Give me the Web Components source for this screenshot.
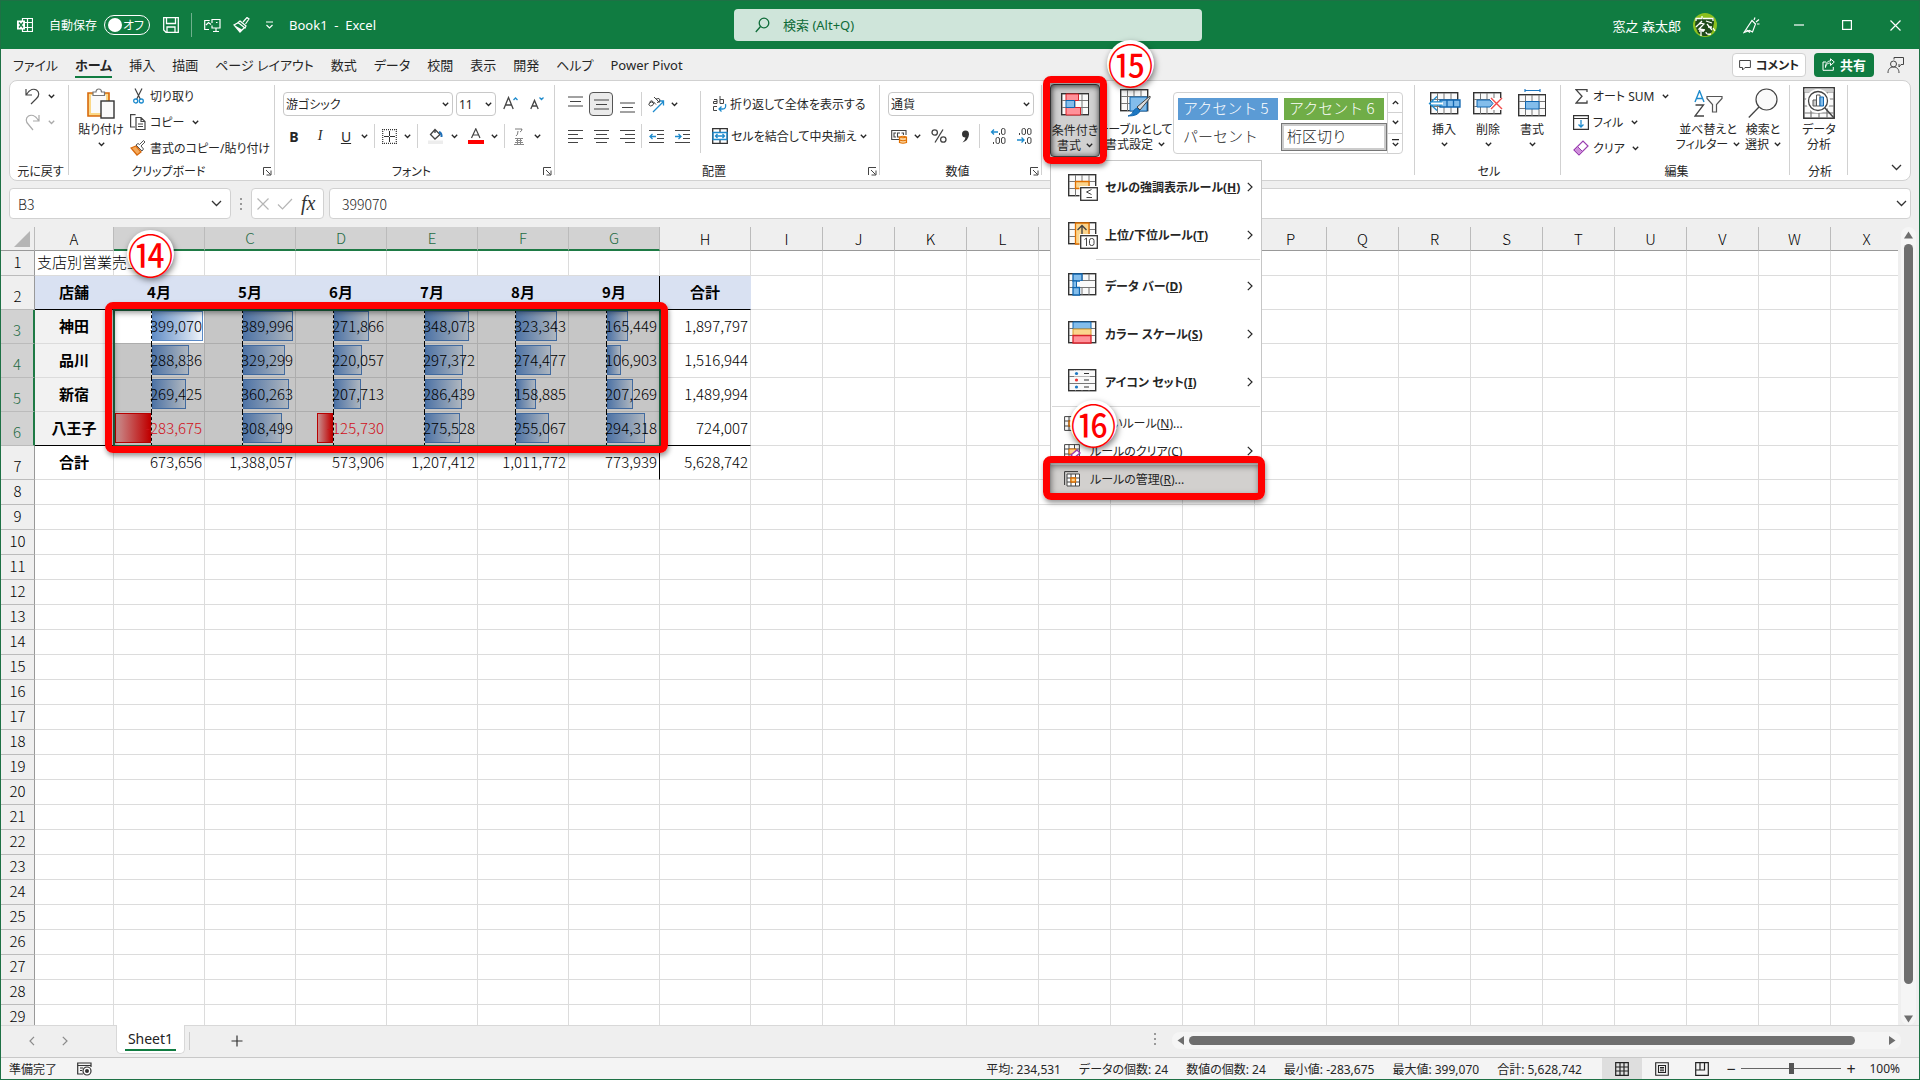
<!DOCTYPE html>
<html lang="ja">
<head>
<meta charset="utf-8">
<title>Book1 - Excel</title>
<style>
    html, body { height: 100%; }
    body {
        margin: 0;
        overflow: hidden;
        background: #efefef;
        color: #262626;
        font-family: "Noto Sans", "Noto Sans CJK JP", sans-serif;
        font-size: 12px;
        font-feature-settings: "palt";
    }
</style>
</head>
<body>
<excel-app></excel-app>

<script>
// width, height, markup
const G = 'fill="none" stroke="#444" stroke-width="1"';
const B = 'fill="none" stroke="#1e8bcd" stroke-width="1.3"';
const grid28 = `<rect x=".7" y=".7" width="27" height="21" fill="#fafafa" stroke="#333" stroke-width="1.4"/><path d="M1 7.5h26M1 14.5h26M7.5 1v21M14 1v21M21 1v21" fill="none" stroke="#777"/>`;
const ICONS = {
    excel: [16, 16, `<path d="M5.5 1.5h10v13h-10zM5 5.500h10M5 10.500h10M10.500 1.500v13" fill="none" stroke="#fff" stroke-width="1.2"/><rect x="0" y="3.500" width="8" height="9" fill="#fff"/><path d="M2 5.500l4 5M6 5.500l-4 5" stroke="#107c41" stroke-width="1.3"/>`],
    save: [16, 16, `<path d="M.7.700h14.600v14.600H3L.700 13zM3.500 1v5.500h9V1M4 15v-5h8v5" fill="none" stroke="#fff" stroke-width="1.300"/>`],
    screen: [17, 16, `<path d="M5 12.500H.700V3.500h5M8 6V2.500h8v8.500H8V8.500M12 11v3.500M9 14.500h6M2 8l2.500-2.500L7 7.500M12 5.500h1.500" fill="none" stroke="#fff" stroke-width="1.200"/>`],
    brushw: [17, 16, `<path d="M10 5l4-4.500 2 1.500-3.500 5M7 4l6 5-1 2-7-5.500zM5.500 5.500L1 8l6 7 4.500-4.500" fill="#107c41" stroke="#fff" stroke-width="1.200"/><path d="M1 8l6 6.800 2-2.300z" fill="#fff"/>`],
    qat: [9, 8, `<path d="M1 1h7M1.500 4l3 3 3-3" fill="none" stroke="#fff" stroke-width="1.200"/>`],
    search: [15, 16, `<circle cx="9" cy="6" r="4.800" fill="none" stroke="#0e6b38" stroke-width="1.300"/><path d="M5.500 9.500L.800 15" stroke="#0e6b38" stroke-width="1.300"/>`],
    avatar: [24, 24, `<circle cx="12" cy="12" r="12" fill="#8cc01f"/><path d="M3 5h18v5l-2 9-5 4h-4l-5-3-3-8z" fill="#1f4a1c"/><path d="M3 8V5.500h6V3M10 5.500h10V8M6 11l3-3M13 8l6 2M3 14q4-5 8-3l-5 5 6 1M14 11l5 6M8 19v4M6 18h5M13 19q0 3 5 2M20 15l2 3M15 14h4" fill="none" stroke="#fff" stroke-width="1.300"/>`],
    pen: [17, 17, `<path d="M1 15.500l8-12 3.500 3.500-3 8-3-1.500zM3 12.500l4 3M11 3l1-2.500M13 5l3-2.500M14 7h2.500" fill="none" stroke="#fff" stroke-width="1.200"/>`],
    min: [10, 10, `<path d="M0 5h10" stroke="#fff" stroke-width="1.200"/>`],
    max: [10, 10, `<rect x=".600" y=".600" width="8.800" height="8.800" fill="none" stroke="#fff" stroke-width="1.200"/>`],
    close: [11, 11, `<path d="M.500.500l10 10M10.500.500l-10 10" stroke="#fff" stroke-width="1.200"/>`],
    comment: [12, 12, `<path d="M.600 1.500h10.800v7H6L3.500 11V8.500H.600z" ${G}/>`],
    share: [13, 13, `<path d="M4 4H1v8.300h10.300V9M3.500 9.500C4 6 6 5 8.500 5V7.500L12.300 4 8.500.800V3C5 3 3.500 5.500 3.500 9.500z" fill="none" stroke="#fff"/>`],
    person: [18, 18, `<circle cx="6.500" cy="8" r="3" ${G}/><path d="M1 17c0-4 2-6 5.500-6s5.500 2 5.500 6M7 3.500v-2h9.500v7H14l-2 2.500V8" ${G}/>`],
    chev: [7, 5, `<path d="M.800.800l2.700 2.700L6.200.800" fill="none" stroke="currentColor" stroke-width="1.300"/>`],
    chevup: [7, 5, `<path d="M.800 4l2.700-2.700L6.200 4" fill="none" stroke="currentColor" stroke-width="1.300"/>`],
    chevbar: [7, 8, `<path d="M0 .700h7M.800 4l2.700 2.700L6.200 4" fill="none" stroke="currentColor" stroke-width="1.300"/>`],
    bigchev: [11, 7, `<path d="M1 1l4.500 4.500L10 1" fill="none" stroke="#333" stroke-width="1.300"/>`],
    right: [6, 10, `<path d="M.800.800L5 5 .800 9.200" fill="none" stroke="currentColor" stroke-width="1.200"/>`],
    left: [6, 10, `<path d="M5 .800L1 5l4 4.200" fill="none" stroke="currentColor" stroke-width="1.200"/>`],
    launcher: [9, 9, `<path d="M.500 8V.500H8M3 3l4.500 4.500M8 3.500v4.500H3.500" ${G}/>`],
    undo: [15, 17, `<path d="M1 1v6h6M1.500 6.500C5 1 9 .500 11.500 2c3 2 3 5.500 0 8.500L6 16" fill="none" stroke="#444" stroke-width="1.200"/>`],
    redo: [15, 17, `<path d="M14 1v6H8M13.500 6.500C10 1 6 .500 3.500 2c-3 2-3 5.500 0 8.500L8 16" fill="none" stroke="#aaa" stroke-width="1.200"/>`],
    paste: [28, 31, `<path d="M1 5h21v23H1z" fill="#fbd887" stroke="#d8690c" stroke-width="1.600"/><path d="M4 7h15v18H4z" fill="#fafafa"/><path d="M6 7.500V4h3c0-4 5.500-4 5.500 0h3v3.500z" fill="#fff" stroke="#777" stroke-width="1.200"/><rect x="14" y="13" width="13" height="17" fill="#fafafa" stroke="#333" stroke-width="1.400"/>`],
    cut: [11, 16, `<path d="M2 .500l5.500 11M9 .500L3.500 11.500" stroke="#444" stroke-width="1.200"/><circle cx="2.700" cy="13" r="2" ${B}/><circle cx="8.300" cy="13" r="2" ${B}/>`],
    copy: [16, 16, `<path d="M5 13H.600V.600h5M6 3.500h5l4 4v8H6zM11 3.500v4h4M8 10h5M8 12.500h5" fill="none" stroke="#444" stroke-width="1.200"/>`],
    brush: [16, 16, `<path d="M1 8l5-2 5 6-4 3z" fill="#f5a95a" stroke="#d8690c" stroke-width="1.300"/><path d="M6 5l6 6 1.500-2L11 6l4-4-1.500-1.500-4 4L8 3.500z" fill="#fff" stroke="#555"/>`],
    growf: [16, 16, `<path d="M.800 13L5.500 1.500 10.200 13M2.500 9h6" fill="none" stroke="#444" stroke-width="1.300"/><path d="M10.500 4l2-2 2 2" ${B}/>`],
    shrinkf: [15, 16, `<path d="M.800 13L4.500 4.500 8.200 13M2.200 10h4.600" fill="none" stroke="#444" stroke-width="1.300"/><path d="M9.500 1.500l2 2 2-2" ${B}/>`],
    borders: [15, 15, `<path d="M0 .700h15M0 14.300h15M.700 0v15M14.300 0v15" stroke="#333" stroke-width="1.200" stroke-dasharray="1 1"/><path d="M7.500 2v11M2 7.500h11" stroke="#333" stroke-width="1" stroke-dasharray="5 1"/>`],
    fill: [16, 16, `<path d="M7 1.500l5 5-5 4.500-4.500-4.500zM7 1v4" fill="none" stroke="#444" stroke-width="1.300"/><path d="M11 4q3 1 2.500 5" stroke="#1e6fb8" stroke-width="2" fill="none"/><rect x="0" y="12.500" width="15" height="3.500" fill="#ededed"/>`],
    fontc: [16, 16, `<path d="M3.500 10L7.800.800 12 10M5 7h5.600" fill="none" stroke="#444" stroke-width="1.200"/><rect x="0" y="12" width="16" height="4" fill="#f00"/>`],
    ruby: [12, 17, `<path d="M2 1h7q0 2-2 3M5 3q0 4-2 5" ${G} opacity=".700"/><path d="M2 10.500h8M3 12.500h6M2 14.500h8M1 16.500h10M4.500 10v6M7.500 10v6" stroke="#888"/>`],
    top: [15, 17, `<path d="M0 1h15M2 5.500h11M0 10h15" stroke="#444" stroke-width="1.200"/>`],
    middle: [15, 17, `<path d="M0 4h15M2 8.500h11M0 13h15" stroke="#444" stroke-width="1.200"/>`],
    bottom: [15, 17, `<path d="M0 7h15M2 11.500h11M0 16h15" stroke="#444" stroke-width="1.200"/>`],
    center: [15, 15, `<path d="M0 1.500h15M2 5.500h11M0 9.500h15M2 13.500h11" stroke="#444" stroke-width="1.200"/>`],
    leftal: [15, 15, `<path d="M0 1.500h15M0 5.500h10M0 9.500h15M0 13.500h10" stroke="#444" stroke-width="1.200"/>`],
    rightal: [15, 15, `<path d="M0 1.500h15M5 5.500h10M0 9.500h15M5 13.500h10" stroke="#444" stroke-width="1.200"/>`],
    orient: [17, 17, `<path d="M5 16L15.500 5.500M11 5h4.500v4.500" ${B}/><path d="M1.500 6.500q1-3 3.500-1l3 3M6 6.500q-1 4-3.500 3.500-3-1-1-3t4 0M6 1l5.500 5.500M8 3q4-1.500 4 1t-3 2.500" ${G}/>`],
    outdent: [15, 15, `<path d="M0 1.500h15M8 5.500h7M8 9.500h7M0 13.500h15" stroke="#444" stroke-width="1.200"/><path d="M7 7.500H1M3.500 5L1 7.500 3.500 10" ${B}/>`],
    indent: [15, 15, `<path d="M0 1.500h15M8 5.500h7M8 9.500h7M0 13.500h15" stroke="#444" stroke-width="1.200"/><path d="M0 7.500h6M3.500 5L6 7.500 3.500 10" ${B}/>`],
    wrap: [15, 17, `<path d="M5 7.500V3.500H2M5 5.500H1.500v2H5M8 0v7.500h3.500v-4H8M5 10.500H1.500v4H5" ${G}/><path d="M13.500 8q1 5-3 5H7M9.500 10.500L7 13l2.500 2.500" ${B}/>`],
    merge: [16, 16, `<path d="M.700.700h14.600v14.600H.700zM8 1v3M8 12v3" fill="none" stroke="#333" stroke-width="1.300"/><path d="M1 4.500h14v7H1zM3.500 8h9M5.500 6L3.500 8l2 2M10.500 6l2 2-2 2" ${B}/>`],
    currency: [17, 15, `<path d="M8 10.500H.700v-9H15V6M5 4H3v4h2M9 4H6.500v4h2M10.500 4h2v2" fill="none" stroke="#444" stroke-width="1.100"/><path d="M8.500 8v5.500q3.500 1.500 7 0V8q-3.500-1.500-7 0 3.500 1.500 7 0M8.500 11q3.500 1.500 7 0" fill="#fbd29b" stroke="#e07000" stroke-width="1.200"/>`],
    percent: [16, 16, `<circle cx="3.700" cy="4.500" r="2.700" fill="none" stroke="#444" stroke-width="1.300"/><circle cx="12.300" cy="11.500" r="2.700" fill="none" stroke="#444" stroke-width="1.300"/><path d="M12 1.500L4 14.500" stroke="#444" stroke-width="1.300"/>`],
    comma: [9, 13, `<path d="M4.500.500a3.500 3.500 0 1 0 0 7Q4 10.500 1.500 12.500q6-2 6.500-8Q8 .500 4.500.500" fill="#333"/>`],
    decinc: [16, 16, `<path d="M8 4H1.500M4 1.500L1.500 4 4 6.500" ${B}/><rect x="11.500" y=".500" width="3.500" height="6" rx="1.500" ${G}/><rect x="6" y="9.500" width="3.500" height="6" rx="1.500" ${G}/><rect x="11.500" y="9.500" width="3.500" height="6" rx="1.500" ${G}/><path d="M3.500 14v2M9.500 5v2" stroke="#444"/>`],
    decdec: [16, 16, `<path d="M1 12h7M5.500 9.500L8 12l-2.500 2.500" ${B}/><rect x="11.500" y=".500" width="3.500" height="6" rx="1.500" ${G}/><rect x="6" y=".500" width="3.500" height="6" rx="1.500" ${G}/><rect x="11.500" y="9.500" width="3.500" height="6" rx="1.500" ${G}/><path d="M3.500 5v2M9.500 14v2" stroke="#444"/>`],
    condfmt: [28, 23, grid28 + `<path d="M5 1h12.500v6.500H5zM5 14.500h14.500V22H5z" fill="#ff9199" stroke="#d8222b"/><path d="M5 7.500h8.500v7H5z" fill="#83bdeb" stroke="#1066b0"/>`],
    tablefmt: [31, 28, grid28 + `<path d="M10 8h17v14H10z" fill="#83bdeb" stroke="#1066b0"/><path d="M30 7L17 18l3 3L30 9z" fill="#ddd" stroke="#444"/><path d="M17 19l3 3q-2 5-12 5 4-1 5-4t4-4" fill="#1e78c2" stroke="#1066b0"/>`],
    insert: [33, 23, `<g transform="translate(2 0)">${grid28}</g><path d="M12 8h20v7H12zM19 8v7M25.500 8v7" fill="#83bdeb" stroke="#1066b0" stroke-width="1.300"/><path d="M3 9.800h12v3.400H3z" fill="#fff"/><path d="M9 4.500L1.500 11.500 9 18.500M2.500 9.800h12M2.500 13.200h12" fill="none" stroke="#1e8bcd" stroke-width="1.300"/>`],
    del: [30, 23, grid28 + `<rect x="17" y="6" width="13" height="12" fill="#fff"/><path d="M4 8h13l3 3.500-3 3.500H4z" fill="#83bdeb" stroke="#1066b0"/><path d="M18 6l11 11M29 6L18 17" stroke="#f04b4b" stroke-width="1.400"/>`],
    format: [28, 29, `<path d="M7 1.500h15M7 0v3M22 0v3" stroke="#1e78c2" stroke-width="1.200"/><g transform="translate(0 5)">${grid28}<path d="M7.500 7.500H21v7.500H7.500z" fill="#83bdeb" stroke="#1066b0"/></g>`],
    sum: [13, 15, `<path d="M12 3V.700H1l6 6.600L1 14h11v-2.500" fill="none" stroke="#444" stroke-width="1.300"/>`],
    filld: [16, 15, `<path d="M.600.600h14.800v13.800H.600zM.600 3.500h14.800" fill="none" stroke="#333" stroke-width="1.200"/><path d="M8 5v7M5.500 9.500L8 12l2.500-2.500" ${B}/>`],
    eraser: [16, 16, `<path d="M1 10L10 1l5 5-9 9z" fill="#fff" stroke="#9a3fb0" stroke-width="1.200"/><path d="M1 10l3.500-3.500 5 5L6 15z" fill="#cf8fdb" stroke="#9a3fb0"/>`],
    sort: [29, 27, `<path d="M1 12L5.500.800 10 12M2.700 8.500h5.600" fill="none" stroke="#1e8bcd" stroke-width="1.400"/><path d="M1.500 15h8L1 26h9" fill="none" stroke="#444" stroke-width="1.300"/><path d="M13 6.500h15v2l-5.500 6V22h-4v-7.500l-5.500-6z" fill="#fafafa" stroke="#555" stroke-width="1.200"/>`],
    find: [30, 30, `<circle cx="18.500" cy="11.500" r="10.500" fill="#fafafa" stroke="#444" stroke-width="1.200"/><path d="M11 19L.800 29.500" stroke="#444" stroke-width="1.300"/>`],
    analyze: [32, 32, `<rect x=".800" y=".800" width="30.400" height="30.400" fill="#fafafa" stroke="#333" stroke-width="1.500"/><path d="M1 5h30M1 12h30M1 19h30M1 26h30M8 5v26M16 5v26M24 5v26" stroke="#777" stroke-width="1.200"/><rect x="1.500" y="1.500" width="29" height="3.500" fill="#ccc"/><circle cx="15" cy="14" r="10.500" fill="#fff" stroke="#fff" stroke-width="3"/><circle cx="15" cy="14" r="9.500" fill="#fff" stroke="#444" stroke-width="1.300"/><path d="M22 21l9 10" stroke="#444" stroke-width="1.500"/><path d="M10 13h3.500v6H10z" fill="#ccc" stroke="#555"/><path d="M13.500 8h3.500v11h-3.500z" fill="#fff" stroke="#555"/><path d="M17 10h3.500v9H17z" fill="#83bdeb" stroke="#1066b0"/>`],
    hl: [31, 27, grid28 + `<path d="M7.500 7.500H21v7H7.500z" fill="#fbd58d" stroke="#e07000" stroke-width="1.300"/><rect x="11.500" y="12" width="19" height="15" fill="#fff"/><rect x="12.700" y="13.700" width="16.600" height="12.600" fill="#fff" stroke="#333" stroke-width="1.300"/><path d="M23.500 15.500L18.500 18l5 2.500M18.500 23.500h5.500" ${G}/>`],
    topb: [31, 27, grid28 + `<path d="M7.500 1H21v21H7.500z" fill="#fbd58d" stroke="#e07000" stroke-width="1.300"/><path d="M14 16V3.500M9.500 8L14 3.500 18.500 8" fill="none" stroke="#444" stroke-width="1.400"/><rect x="11.500" y="12" width="19" height="15" fill="#fff"/><rect x="12.700" y="13.700" width="16.600" height="12.600" fill="#fff" stroke="#333" stroke-width="1.300"/><path d="M16.500 17.500l2-1.500v8" ${G}/><rect x="21.500" y="16.500" width="4.500" height="7" rx="2" ${G}/>`],
    databar: [31, 27, grid28 + `<path d="M5 1h9v7H5zM5 14.500h6.500V22H5z" fill="#83bdeb" stroke="#1066b0" stroke-width="1.300"/><rect x="5" y="8" width="3.500" height="6.500" fill="#83bdeb" stroke="#1066b0"/><rect x="12" y="8" width="10" height="6" fill="#fafafa"/>`],
    scale: [31, 27, grid28 + `<path d="M5 1h18v7H5z" fill="#83bdeb" stroke="#1066b0"/><path d="M5 8h18v6.500H5z" fill="#fbd58d" stroke="#d89b2c"/><path d="M5 14.500h18V22H5z" fill="#ff9199" stroke="#d8222b" stroke-width="1.300"/>`],
    iconset: [31, 27, grid28 + `<path d="M6 1.400h16v6H6zM6 8h16v6H6zM6 15h16v6H6z" fill="#fafafa"/><circle cx="8.500" cy="4.500" r="1.600" fill="#1e78c2"/><circle cx="8.500" cy="11" r="1.600" fill="#e33"/><circle cx="8.500" cy="18" r="1.600" fill="#1e78c2"/><path d="M16 4.500h5M16 11h5M16 18h5" stroke="#333"/>`],
    newrule: [16, 15, `<path d="M.600.600h14.800v13.800H.600zM.600 5h14.800M.600 10h14.800M5 .600v14M10.500.600v14" ${G}/><path d="M5 5h5.500v5H5z" fill="#fbd58d" stroke="#e07000" stroke-width="1.300"/>`],
    clearrule: [17, 15, `<path d="M.600.600h14.800v13.800H.600zM.600 5h14.800M.600 10h14.800M5 .600v14M10.500.600v14" ${G}/><path d="M5 5h7v5H5z" fill="#fbd58d" stroke="#e07000"/><path d="M7 11l6-5 3 3-6 5z" fill="#fff" stroke="#9a3fb0" stroke-width="1.300"/>`],
    manage: [17, 16, `<path d="M.600 14V.600H14" fill="none" stroke="#333"/><path d="M3 3h12.500v12H3zM3 7h12.500M3 11h12.500M7 3v12M11.500 3v12" fill="#fff" stroke="#444"/><path d="M7 7h4.500v4H7z" fill="#fbd58d" stroke="#e07000" stroke-width="1.300"/>`],
    macro: [15, 14, `<path d="M14 5V1H.700v11H6M.700 3.500H14M3 6h3M3 8.500h2" fill="none" stroke="#333" stroke-width="1.200"/><circle cx="10" cy="9" r="4" fill="#fff" stroke="#333" stroke-width="1.200"/><circle cx="10" cy="9" r="2" fill="#333"/>`],
    normal: [14, 14, `<path d="M.700.700h12.600v12.600H.700zM.700 5h12.600M.700 9h12.600M5 .700v12.600M9 .700v12.600" fill="none" stroke="#222" stroke-width="1.200"/>`],
    layout: [14, 14, `<path d="M.700.700h12.600v12.600H.700zM3.500 3.500h7v7h-7zM5 5.500h4M5 7h4M5 8.700h4" fill="none" stroke="#222" stroke-width="1.100"/>`],
    pagebrk: [14, 14, `<path d="M.700.700h12.600v12.600H.700zM1 8h8.500v-7M5 .700v7.300" fill="none" stroke="#222" stroke-width="1.200"/>`],
    plus: [12, 12, `<path d="M6 .500v11M.500 6h11" stroke="#333" stroke-width="1.200"/>`],
    cancel: [12, 12, `<path d="M.500.500l11 11M11.500.500l-11 11" stroke="#b5b5b5" stroke-width="1.200"/>`],
    ok: [16, 12, `<path d="M1 6.500L5.500 11 15 1" fill="none" stroke="#b5b5b5" stroke-width="1.200"/>`],
    dots: [3, 12, `<path d="M0 0h2v2H0zM0 5h2v2H0zM0 10h2v2H0z" fill="#999"/>`],
    triup: [9, 8, `<path d="M4.500.500L9 7.500H0z" fill="#6e6e6e"/>`],
    tridown: [9, 8, `<path d="M4.500 7.500L9 .500H0z" fill="#6e6e6e"/>`],
    trileft: [8, 9, `<path d="M.500 4.500L7 0v9z" fill="#6e6e6e"/>`],
    triright: [8, 9, `<path d="M7.500 4.500L1 0v9z" fill="#6e6e6e"/>`]
};

// shared reset for the real controls that sit in each shadow root
const BASE = `
    * { box-sizing: border-box; }
    button, input, select {
        font: inherit; font-feature-settings: inherit; color: inherit;
        margin: 0; padding: 0; border: 0; background: none; outline: 0;
    }
    button { display: inline-flex; align-items: center; justify-content: center; white-space: nowrap; }
    select { appearance: none; }
    a { color: inherit; text-decoration: none; }
`;

function attach(el, css, html) {
    const template = document.createElement('template');
    template.innerHTML = `<style>${BASE}${css}</style>${html}`;
    el.attachShadow({ mode: 'open' }).appendChild(template.content.cloneNode(true));
}

const ico = name => `<xl-icon name="${name}"></xl-icon>`;

class XlIcon extends HTMLElement {
    constructor() {
        super();
        this.attachShadow({ mode: 'open' });
    }
    connectedCallback() {
        const [w, h, body] = ICONS[this.getAttribute('name')];
        this.shadowRoot.innerHTML = `<style>:host { display: inline-flex; flex: none; justify-content: center; }</style>
            <svg width="${w}" height="${h}" viewBox="0 0 ${w} ${h}" aria-hidden="true">${body}</svg>`;
    }
}

class TitleBar extends HTMLElement {
    constructor() {
        super();
        attach(this, `
            :host { display: grid; grid-template-columns: 1fr 468px 1fr; align-items: center; height: 48px; padding-left: 16px; background: #107c41; color: #fff; }
            .left, .right, .search { display: flex; align-items: center; }
            .name { margin: 0 7px 0 16px; }
            .toggle { position: relative; display: flex; align-items: center; justify-content: flex-end; width: 46px; height: 20px; border: 1px solid #fff; border-radius: 10px; padding-right: 5px; white-space: nowrap; }
            .toggle input { appearance: none; position: absolute; left: 3px; top: 2px; width: 14px; height: 14px; border-radius: 50%; background: #fff; }
            .qat { display: flex; align-items: center; gap: 12px; margin: 0 15px 0 13px; }
            .qat i { width: 1px; height: 24px; background: #6fb08d; }
            .qat button:last-child { margin-left: 3px; }
            .book { font-size: 13px; white-space: pre; }
            .search { height: 32px; border-radius: 4px; background: #cfe5da; padding-left: 21px; gap: 13px; color: #0e6b38; font-size: 13px; }
            .search input { flex: 1; height: 30px; }
            .search input::placeholder { color: #0e6b38; opacity: 1; }
            .right { justify-content: flex-end; font-size: 13px; }
            .av { display: flex; margin: 0 10px 0 12px; }
            .win { width: 48px; height: 48px; }
        `, `
            <div class="left">${ico('excel')}
                <label class="name" for="auto">自動保存</label>
                <span class="toggle"><input type="checkbox" id="auto">オフ</span>
                <div class="qat"><button aria-label="上書き保存">${ico('save')}</button><i></i>
                <button aria-label="画面">${ico('screen')}</button><button aria-label="書式">${ico('brushw')}</button><button aria-label="カスタマイズ">${ico('qat')}</button></div>
                <span class="book">Book1  -  Excel</span>
            </div>
            <label class="search">${ico('search')}<input placeholder="検索 (Alt+Q)"></label>
            <div class="right">窓之 森太郎<span class="av">${ico('avatar')}</span>
                <button class="win" aria-label="ペン">${ico('pen')}</button><button class="win" aria-label="最小化">${ico('min')}</button>
                <button class="win" aria-label="最大化">${ico('max')}</button><button class="win" aria-label="閉じる">${ico('close')}</button>
            </div>`);
    }
}

class RibbonTabs extends HTMLElement {
    constructor() {
        super();
        const tabs = ['ファイル', 'ホーム', '挿入', '描画', 'ページ レイアウト', '数式', 'データ', '校閲', '表示', '開発', 'ヘルプ', 'Power Pivot'];
        attach(this, `
            :host { display: flex; align-items: center; justify-content: space-between; height: 31px; padding: 0 13px 0 12px; font-size: 13px; }
            nav, .right { display: flex; align-items: center; }
            nav { gap: 17px; }
            nav a { line-height: 20px; padding: 3px 0 1px; border-bottom: 2px solid transparent; white-space: nowrap; }
            nav a.on { font-weight: bold; border-color: #107c41; }
            .right { gap: 8px; }
            button { height: 24px; border-radius: 4px; gap: 5px; font-weight: bold; }
            .comment { width: 74px; background: #fff; border: 1px solid #d1d1d1; font-size: 12px; }
            .share { width: 60px; background: #107c41; color: #fff; }
            .person { margin-left: 4px; width: 20px; }
        `, `<nav>${tabs.map(t => `<a href="#"${t === 'ホーム' ? ' class="on"' : ''}>${t}</a>`).join('')}</nav>
            <div class="right"><button class="comment">${ico('comment')}コメント</button>
            <button class="share">${ico('share')}共有</button><button class="person" aria-label="ユーザー">${ico('person')}</button></div>`);
    }
}

// a ribbon group: slotted tools above, its caption below
class RibbonGroup extends HTMLElement {
    constructor() {
        super();
        attach(this, `
            :host { display: flex; flex-direction: column; flex: none; position: relative; height: 99px; }
            :host::after { content: ""; position: absolute; right: 0; top: 4px; bottom: 5px; width: 1px; background: #d1d1d1; }
            .body { flex: 1; display: flex; }
            .cap { display: flex; align-items: center; height: 18px; padding: 0 3px 0 5px; white-space: nowrap; }
            .cap span { flex: 1; text-align: center; }
        `, `<div class="body"><slot></slot></div><div class="cap"><span></span></div>`);
    }
    connectedCallback() {
        this.shadowRoot.querySelector('span').textContent = this.getAttribute('label') || '';
        if (this.hasAttribute('launcher')) {
            this.shadowRoot.querySelector('.cap').insertAdjacentHTML('beforeend', ico('launcher'));
        }
    }
}

// tall button: icon over a one or two line label
class BigButton extends HTMLElement {
    constructor() {
        super();
        attach(this, `
            :host { display: block; flex: none; }
            button { display: flex; flex-direction: column; justify-content: flex-start; width: 100%; height: 73px; line-height: 15px; border-radius: 4px; }
            :host([pressed]) button { background: #d0d0d0; border: 1px solid #444; box-shadow: inset 0 0 6px #666; padding: 0; }
            .pic { display: flex; align-items: center; height: 38px; }
            .line { display: flex; align-items: center; gap: 5px; height: 15px; }
        `, '<button></button>');
    }
    connectedCallback() {
        const [one, two] = this.getAttribute('label').split('|');
        const chev = this.hasAttribute('plain') ? '' : ico('chev');
        this.shadowRoot.querySelector('button').innerHTML =
            `<span class="pic">${ico(this.getAttribute('icon'))}</span><span>${one}</span><span class="line">${two || ''}${chev}</span>`;
    }
}

// red numbered marker
class StepMark extends HTMLElement {
    constructor() {
        super();
        attach(this, `
            :host { position: absolute; z-index: 9; width: 47px; height: 47px; border-radius: 50%; background: #fff; box-shadow: 1px 3px 6px rgba(0,0,0,.5); }
            span { display: flex; align-items: center; justify-content: center; width: 47px; height: 47px; color: #f00; font: 400 46px/47px "Noto Sans CJK JP", sans-serif; font-feature-settings: normal; }
        `, '<span><slot></slot></span>');
    }
}

// red highlight frame
class StepFrame extends HTMLElement {
    constructor() {
        super();
        attach(this, `
            :host { position: absolute; z-index: 8; border: 7px solid #f00; border-radius: 8px; pointer-events: none;
                box-shadow: 1px 3px 5px rgba(0,0,0,.4), inset 1px 3px 6px rgba(0,0,0,.5); }
        `, '');
    }
}

class RuleMenu extends HTMLElement {
    constructor() {
        super();
        const big = (icon, text, key) => `<button class="big">${ico(icon)}<span>${text}(<u>${key}</u>)</span>${ico('right')}</button>`;
        const small = (icon, text, key, more, end) => `<button class="small${end ? ' on' : ''}">${ico(icon)}<span>${text}(<u>${key}</u>)${more ? '' : '...'}</span>${more ? ico('right') : ''}</button>`;
        attach(this, `
            :host { position: absolute; z-index: 5; width: 212px; background: #fff; border: 1px solid #c6c6c6; padding: 2px 0 0; }
            button { display: flex; justify-content: flex-start; width: 100%; padding: 0 8px 0 17px; }
            button span { flex: 1; text-align: left; }
            .big { height: 48px; gap: 6px; font-weight: bold; }
            .small { height: 28px; gap: 9px; padding-left: 13px; }
            .on { background: #d2d0ce; }
            hr { margin: 0 1px 2px; border: 0; border-top: 1px solid #d8d8d8; }
            hr.in { margin-left: 45px; }
            step-frame { left: -8px; right: -4px; bottom: -7px; height: 44px; }
            step-mark { left: 19px; bottom: 46px; }
        `, big('hl', 'セルの強調表示ルール', 'H') + big('topb', '上位/下位ルール', 'T') + '<hr class="in">' +
            big('databar', 'データ バー', 'D') + big('scale', 'カラー スケール', 'S') + big('iconset', 'アイコン セット', 'I') + '<hr>' +
            small('newrule', '新しいルール', 'N') + small('clearrule', 'ルールのクリア', 'C', true) + small('manage', 'ルールの管理', 'R', false, true) +
            '<step-frame></step-frame><step-mark>⑯</step-mark>');
    }
}

class MainRibbon extends HTMLElement {
    constructor() {
        super();
        const chev = `<button class="c" aria-label="その他">${ico('chev')}</button>`;
        const tool = (name, cls = '') => `<button class="t ${cls}" aria-label="${name}">${ico(name)}</button>`;
        attach(this, `
            :host { display: flex; margin: 0 8px; border: 1px solid #d1d1d1; border-radius: 8px; background: #fff; height: 101px; }
            .rows { display: flex; flex-direction: column; gap: 8px; padding-top: 11px; }
            .row { display: flex; align-items: center; height: 24px; }
            .stack { display: flex; flex-direction: column; padding-top: 2px; }
            .stack .row { height: 26px; gap: 4px; }
            .stack .row button { gap: 4px; }
            .stack button:first-child xl-icon { width: 16px; }
            .t { width: 22px; height: 24px; }
            .g { margin-left: 4px; }
            .c { width: 14px; height: 24px; }
            .row i { width: 1px; height: 24px; margin: 0 3px; background: #d1d1d1; }
            .sel { border: 1px solid #555; border-radius: 4px; background: #ebebeb; width: 24px; margin: 0 -1px 0 3px; }
            .combo { position: relative; display: flex; align-items: center; }
            .combo select { width: 100%; height: 24px; border: 1px solid #c8c8c8; border-radius: 4px; padding-left: 2px; background: #fff; }
            .combo xl-icon { position: absolute; right: 4px; pointer-events: none; }
            .clip { width: 206px; } .undo { width: 59px; } .font { width: 280px; } .align { width: 325px; } .num { width: 162px; }
            .style { width: 373px; } .cells { width: 146px; } .edit { width: 229px; } .ana { width: 58px; }
            .undo .stack { padding-left: 15px; }
            .undo .stack .row { gap: 8px; }
            .font .rows { padding-left: 8px; } .align .rows { padding-left: 9px; } .num .rows { padding-left: 8px; }
            .letter { font: 14px "Noto Sans"; width: 22px; }
            .vr { width: 1px; height: 62px; margin: 10px 11px 0 7px; background: #d1d1d1; }
            .wrap { padding-top: 11px; display: flex; flex-direction: column; gap: 8px; align-items: flex-start; }
            .wrap button { gap: 3px; height: 24px; }
            big-button { padding-top: 3px; }
            .cf { position: relative; margin-left: 8px; }
            .cf step-frame { left: -7px; top: -5px; width: 64px; height: 88px; }
            .cf step-mark { left: 57px; top: -41px; }
            .cf rule-menu { left: 0; top: 79px; }
            .gallery { display: flex; margin: 11px 0 0 3px; width: 230px; height: 62px; border: 1px solid #d1d1d1; border-radius: 4px; }
            .swatches { flex: 1; display: grid; grid-template-columns: 100px 106px; grid-template-rows: 22px 28px; gap: 3px; padding: 5px 0 0 4px;
                font: 300 15px/20px "Noto Sans CJK JP"; font-feature-settings: normal; }
            .swatches button { justify-content: flex-start; padding: 0 0 3px 5px; }
            .a5 { background: #5b9bd5; color: #fff; }
            .a6 { background: #70ad47; color: #fff; margin: 0 3px; }
            .comma { border: 1px solid #777; box-shadow: inset 0 0 0 2px #ccc; }
            .scroll { display: flex; flex-direction: column; width: 15px; border-left: 1px solid #d1d1d1; }
            .scroll button { flex: 1; }
            .scroll button + button { border-top: 1px solid #d1d1d1; }
            .end { flex: 1; display: flex; align-items: flex-end; justify-content: flex-end; padding: 0 8px 9px 0; }
        `, `
            <ribbon-group class="undo" label="元に戻す">
                <div class="stack"><div class="row">${ico('undo')}${ico('chev')}</div><div class="row" style="color:#aaa">${ico('redo')}${ico('chev')}</div></div>
            </ribbon-group>
            <ribbon-group class="clip" label="クリップボード" launcher>
                <big-button style="width:58px;margin-left:3px" icon="paste" label="貼り付け"></big-button>
                <div class="stack">
                    <div class="row"><button>${ico('cut')}切り取り</button></div>
                    <div class="row"><button>${ico('copy')}コピー</button>${chev}</div>
                    <div class="row"><button>${ico('brush')}書式のコピー/貼り付け</button></div>
                </div>
            </ribbon-group>
            <ribbon-group class="font" label="フォント" launcher>
                <div class="rows">
                    <div class="row">
                        <span class="combo" style="width:170px"><select aria-label="フォント"><option>游ゴシック</option></select>${ico('chev')}</span>
                        <span class="combo" style="width:40px;margin-left:3px"><select aria-label="サイズ"><option>11</option></select>${ico('chev')}</span>
                        ${tool('growf', 'g')}${tool('shrinkf', 'g')}
                    </div>
                    <div class="row"><button class="letter"><b>B</b></button><button class="letter g" style="font-family:'Liberation Serif'"><em>I</em></button><button class="letter g"><u>U</u></button>${chev}<i></i>
                        ${tool('borders')}${chev}<i></i>${tool('fill', 'g')}${chev}${tool('fontc', 'g')}${chev}<i></i>${tool('ruby')}${chev}</div>
                </div>
            </ribbon-group>
            <ribbon-group class="align" label="配置" launcher>
                <div class="rows">
                    <div class="row">${tool('top')}${tool('middle', 'sel')}${tool('bottom', 'g')}<i></i>${tool('orient')}${chev}</div>
                    <div class="row">${tool('leftal')}${tool('center', 'g')}${tool('rightal', 'g')}<i></i>${tool('outdent')}${tool('indent', 'g')}</div>
                </div>
                <div class="vr"></div>
                <div class="wrap"><button>${ico('wrap')}折り返して全体を表示する</button><div class="row"><button>${ico('merge')}セルを結合して中央揃え</button><button class="c" aria-label="結合">${ico('chev')}</button></div></div>
            </ribbon-group>
            <ribbon-group class="num" label="数値" launcher>
                <div class="rows">
                    <div class="row"><span class="combo" style="width:146px"><select aria-label="表示形式"><option>通貨</option></select>${ico('chev')}</span></div>
                    <div class="row">${tool('currency')}${chev}${tool('percent', 'g')}${tool('comma', 'g')}<i></i>${tool('decinc', 'g')}${tool('decdec', 'g')}</div>
                </div>
            </ribbon-group>
            <ribbon-group class="style">
                <div class="cf"><big-button pressed style="width:50px" icon="condfmt" label="条件付き|書式"></big-button>
                    <rule-menu></rule-menu><step-frame></step-frame><step-mark>⑮</step-mark></div>
                <big-button style="width:70px" icon="tablefmt" label="テーブルとして|書式設定"></big-button>
                <div class="gallery">
                    <div class="swatches"><button class="a5">アクセント 5</button><button class="a6">アクセント 6</button><button>パーセント</button><button class="comma">桁区切り</button></div>
                    <div class="scroll"><button aria-label="上">${ico('chevup')}</button><button aria-label="下">${ico('chev')}</button><button aria-label="一覧">${ico('chevbar')}</button></div>
                </div>
            </ribbon-group>
            <ribbon-group class="cells" label="セル">
                <big-button style="width:44px;margin-left:7px" icon="insert" label="挿入"></big-button>
                <big-button style="width:44px" icon="del" label="削除"></big-button>
                <big-button style="width:44px" icon="format" label="書式"></big-button>
            </ribbon-group>
            <ribbon-group class="edit" label="編集">
                <div class="stack" style="padding-left:12px;width:108px">
                    <div class="row"><button>${ico('sum')}オート SUM</button><button class="c g" aria-label="合計">${ico('chev')}</button></div>
                    <div class="row"><button>${ico('filld')}フィル</button>${chev}</div>
                    <div class="row"><button>${ico('eraser')}クリア</button>${chev}</div>
                </div>
                <big-button style="width:78px" icon="sort" label="並べ替えと|フィルター"></big-button>
                <big-button style="width:32px" icon="find" label="検索と|選択"></big-button>
            </ribbon-group>
            <ribbon-group class="ana" label="分析"><big-button plain style="width:58px" icon="analyze" label="データ|分析"></big-button></ribbon-group>
            <div class="end">${ico('bigchev')}</div>`);
    }
}

class FormulaBar extends HTMLElement {
    constructor() {
        super();
        attach(this, `
            :host { display: flex; align-items: center; gap: 5px; height: 31px; margin: 7px 8px; font: 300 14px "Noto Sans CJK JP"; }
            .box { display: flex; align-items: center; height: 31px; background: #fff; border: 1px solid #d1d1d1; border-radius: 4px; padding: 0 8px; }
            .name { width: 222px; }
            input { flex: 1; min-width: 0; }
            .dots { width: 10px; text-align: center; }
            .fx { width: 73px; gap: 8px; padding: 0 4px 0 5px; }
            .formula { flex: 1; padding-left: 12px; padding-right: 3px; }
            em { font: italic 20px "Liberation Serif"; color: #333; }
        `, `<div class="box name"><input value="B3" aria-label="名前ボックス">${ico('bigchev')}</div><span class="dots">${ico('dots')}</span>
            <div class="box fx"><button aria-label="キャンセル">${ico('cancel')}</button><button aria-label="入力">${ico('ok')}</button><button><em>fx</em></button></div>
            <div class="box formula"><input value="399070" aria-label="数式">${ico('bigchev')}</div>`);
    }
}

class WorkSheet extends HTMLElement {
    constructor() {
        super();
        attach(this, `
            :host { display: flex; flex: 1; min-height: 0; margin-top: 1px; }
            .view { position: relative; flex: 1; min-width: 0; overflow: hidden; background: #fff; font: 300 15px/20px "Noto Sans CJK JP"; color: #000; font-feature-settings: normal; }
            table { table-layout: fixed; border-collapse: separate; border-spacing: 0; width: max-content; }
            th, td { position: relative; padding: 0 2px 2px; height: 25px; border-right: 1px solid #dcdcdc; border-bottom: 1px solid #dcdcdc; white-space: nowrap; font-weight: 300; text-align: right; }
            thead th { height: 24px; background: #efefef; text-align: center; border-color: #bbb; border-bottom-color: #999; padding: 0; }
            tbody th { background: #efefef; text-align: center; vertical-align: bottom; border-right-color: #999; border-bottom-color: #bbb; padding-bottom: 3px; }
            thead th.on, tbody th.on { background: #d2d2d2; color: #1e6b43; }
            thead th.on { border-bottom: 2px solid #1e7a45; }
            tbody th.on { border-right: 2px solid #1e7a45; }
            .corner i { position: absolute; right: 4px; bottom: 3px; border: 8px solid #b5b5b5; border-left-color: transparent; border-top-color: transparent; }
            .tall > * { height: 34px; }
            td.a { text-align: center; font-weight: bold; }
            td.title { text-align: left; }
            td.head { background: #d9e1f2; border-right-color: #d9e1f2; border-bottom-color: #000; text-align: center; font-weight: bold; }
            td.blk { border-bottom-color: #000; }
            td.edge { border-right-color: #000; }
            td.sel { background: #c6c6c6; border-color: #adadad; }
            td.shade { background: #f2f2f2; }
            td.active { background: #fff; }
            td.sel.edge { border-right-color: #000; }
            td span { position: relative; }
            td.neg { color: #d0101a; }
            .bar { position: absolute; top: 1px; height: 30px; left: 38px; border: 1px solid #416a9f; background: linear-gradient(90deg, #4f74a6, #aeb6bf); }
            .active .bar { border-color: #5b8ac6; background: linear-gradient(90deg, #638ec6, #eef3fa); }
            .neg .bar { left: auto; right: 53px; border-color: #b80000; background: linear-gradient(270deg, #c00000, #c88f8f); }
            .axis { position: absolute; left: 37px; top: 0; height: 34px; border-left: 1px dashed #000; }
            .pick { position: absolute; left: 112px; top: 82px; width: 548px; height: 138px; border: 2px solid #1e6b43; }
            step-frame { left: 104px; top: 75px; width: 563px; height: 151px; }
            step-mark { left: 126px; top: 3px; }
            .scroll { display: flex; flex-direction: column; align-items: center; width: 15px; margin: 0 3px 0 3px; padding: 4px 0 2px; border-radius: 8px; background: #f5f5f5; }
            .thumb { flex: 1; width: 9px; margin: 5px 0 31px; border-radius: 5px; background: #6e6e6e; }
        `, `<div class="view"><table><colgroup></colgroup><thead></thead><tbody></tbody></table>
            <div class="pick"></div><step-frame></step-frame><step-mark>⑭</step-mark></div>
            <div class="scroll">${ico('triup')}<div class="thumb"></div>${ico('tridown')}</div>`);

        const rows = [
            ['支店別営業売上'],
            ['店舗', '4月', '5月', '6月', '7月', '8月', '9月', '合計'],
            ['神田', 399070, 389996, 271866, 348073, 323343, 165449, 1897797],
            ['品川', 288836, 329299, 220057, 297372, 274477, 106903, 1516944],
            ['新宿', 269425, 360263, 207713, 286439, 158885, 207269, 1489994],
            ['八王子', -283675, 308499, -125730, 275528, 255067, 294318, 724007],
            ['合計', 673656, 1388057, 573906, 1207412, 1011772, 773939, 5628742]
        ];
        const root = this.shadowRoot;
        const cols = [...'ABCDEFGHIJKLMNOPQRSTUVWX'];
        const widths = [34, 79].concat(Array(7).fill(91), Array(16).fill(72));
        root.querySelector('colgroup').innerHTML = widths.map(w => `<col style="width:${w}px">`).join('');
        root.querySelector('table').style.width = widths.reduce((a, b) => a + b) + 'px';
        root.querySelector('thead').innerHTML = '<tr><th class="corner"><i></i></th>' +
            cols.map((c, i) => `<th${i > 0 && i < 7 ? ' class="on"' : ''}>${c}</th>`).join('') + '</tr>';

        let html = '';
        for (let r = 1; r <= 29; r++) {
            const picked = r >= 3 && r <= 6;
            html += `<tr class="${r > 1 && r < 8 ? 'tall' : ''}"><th${picked ? ' class="on"' : ''}>${r}</th>`;
            cols.forEach((c, i) => {
                const value = (rows[r - 1] || [])[i];
                const cls = [];
                let body = '';
                if (r === 1 && i === 0) cls.push('title');
                else if (i === 0) cls.push('a');
                if (r === 2 && i < 8) cls.push('head');
                if (r === 6 && i < 8) cls.push('blk');
                if (picked && i === 0) cls.push('shade');
                if (picked && i > 0 && i < 7) {
                    cls.push('sel');
                    if (r === 3 && i === 1) cls.push('active');
                    if (value < 0) cls.push('neg');
                    body = `<div class="bar" style="width:${Math.round(Math.abs(value) / 399070 * 51)}px"></div><div class="axis"></div>`;
                }
                if (i === 6 && r > 1 && r < 8) cls.push('edge');
                if (value !== undefined) body += `<span>${typeof value === 'number' ? value.toLocaleString('en-US') : value}</span>`;
                html += `<td class="${cls.join(' ')}">${body}</td>`;
            });
            html += '</tr>';
        }
        root.querySelector('tbody').innerHTML = html;
    }
}

class SheetTabs extends HTMLElement {
    constructor() {
        super();
        attach(this, `
            :host { display: flex; align-items: center; height: 32px; border-top: 1px solid #d8d8d8; color: #8a8a8a; padding-bottom: 2px; box-sizing: border-box; }
            .nav { display: flex; gap: 27px; padding-left: 28px; width: 115px; }
            a { display: flex; justify-content: center; align-self: flex-start; width: 69px; height: 29px; margin-top: -1px; background: #fff; border: 1px solid #d8d8d8; border-top: 0; border-radius: 0 0 5px 5px; color: #222; font-size: 14px; }
            a span { height: 26px; line-height: 28px; padding: 0 3px; border-bottom: 2px solid #107c41; }
            .add { margin-left: 4px; padding-left: 41px; border-left: 1px solid #ccc; height: 18px; }
            .dots { margin-left: auto; margin-right: 15px; }
            .scroll { display: flex; align-items: center; width: 729px; height: 17px; margin-right: 18px; padding: 0 5px; background: #f5f5f5; border-radius: 8px; }
            .thumb { flex: 1; height: 9px; margin: 0 33px 0 4px; border-radius: 5px; background: #6e6e6e; }
        `, `<div class="nav">${ico('left')}${ico('right')}</div><a href="#"><span>Sheet1</span></a><button class="add" aria-label="新しいシート">${ico('plus')}</button>
            <span class="dots">${ico('dots')}</span><div class="scroll">${ico('trileft')}<div class="thumb"></div>${ico('triright')}</div>`);
    }
}

class StatusBar extends HTMLElement {
    constructor() {
        super();
        const stats = ['平均: 234,531', 'データの個数: 24', '数値の個数: 24', '最小値: -283,675', '最大値: 399,070', '合計: 5,628,742'];
        attach(this, `
            :host { display: flex; align-items: center; height: 22px; background: #f4f4f4; border-top: 1px solid #c8c8c8; padding: 0 19px 0 8px; white-space: nowrap; }
            .rec { margin-left: 20px; }
            .stats { display: flex; gap: 18px; margin-left: auto; margin-right: 20px; }
            .view { width: 40px; height: 21px; }
            .on { background: #dedede; }
            input { appearance: none; width: 100px; height: 12px; margin: 0 5px; background: linear-gradient(#666, #666) center / 100% 1px no-repeat; }
            input::-webkit-slider-thumb { appearance: none; width: 5px; height: 11px; background: #555; }
            .zoom { width: 10px; font-size: 16px; }
            .out { margin-left: 4px; }
            .pct { width: 34px; margin-left: 10px; text-align: right; }
        `, `<span>準備完了</span><button class="rec" aria-label="マクロの記録">${ico('macro')}</button>
            <div class="stats">${stats.map(s => `<span>${s}</span>`).join('')}</div>
            <button class="view on" aria-label="標準">${ico('normal')}</button><button class="view" aria-label="ページ レイアウト">${ico('layout')}</button><button class="view" aria-label="改ページ プレビュー">${ico('pagebrk')}</button>
            <button class="zoom out">−</button><input type="range" aria-label="ズーム"><button class="zoom">+</button><span class="pct">100%</span>`);
    }
}

class ExcelApp extends HTMLElement {
    constructor() {
        super();
        attach(this, `
            :host { display: flex; flex-direction: column; box-sizing: border-box; height: 100vh; border: 1px solid #1e7145; }
            main-ribbon { position: relative; z-index: 3; }
            title-bar, ribbon-tabs, main-ribbon, formula-bar, sheet-tabs, status-bar { flex: none; }
        `, `<title-bar></title-bar><ribbon-tabs></ribbon-tabs><main-ribbon></main-ribbon><formula-bar></formula-bar>
            <work-sheet></work-sheet><sheet-tabs></sheet-tabs><status-bar></status-bar>`);
    }
}

customElements.define('xl-icon', XlIcon);
customElements.define('step-mark', StepMark);
customElements.define('step-frame', StepFrame);
customElements.define('title-bar', TitleBar);
customElements.define('ribbon-tabs', RibbonTabs);
customElements.define('ribbon-group', RibbonGroup);
customElements.define('big-button', BigButton);
customElements.define('rule-menu', RuleMenu);
customElements.define('main-ribbon', MainRibbon);
customElements.define('formula-bar', FormulaBar);
customElements.define('work-sheet', WorkSheet);
customElements.define('sheet-tabs', SheetTabs);
customElements.define('status-bar', StatusBar);
customElements.define('excel-app', ExcelApp);
</script>
</body>
</html>
